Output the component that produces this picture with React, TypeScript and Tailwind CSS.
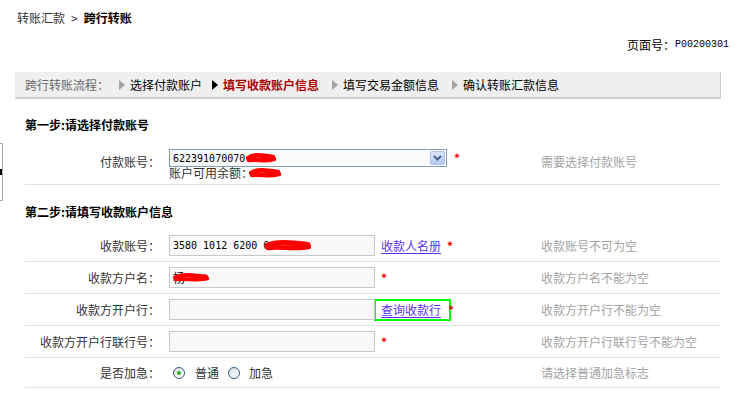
const cjk = { fontFamily: '"Noto Sans CJK SC", "Liberation Sans", sans-serif' };

const Tri = ({ dark, wide }: { dark?: boolean; wide?: boolean }) => (
  <span className={`inline-block w-0 h-0 border-y-[5px] border-y-transparent border-l-[6px] mr-[5px] ${wide ? 'ml-[13px]' : 'ml-[10px]'} ${dark ? 'border-l-black' : 'border-l-[#a3a3a3]'}`} />
);

const Scribble = ({ w, h }: { w: number; h: number }) => (
  <svg width={w} height={h} viewBox={`0 0 ${w} ${h}`} className="absolute">
    <path
      d={`M2 ${h / 2} C ${w * 0.25} ${h * 0.1}, ${w * 0.5} ${h * 0.2}, ${w - 3} ${h * 0.4} M3 ${h * 0.7} C ${w * 0.35} ${h * 0.55}, ${w * 0.7} ${h * 0.9}, ${w - 2} ${h * 0.6}`}
      stroke="#ff0000"
      strokeWidth={h * 0.45}
      strokeLinecap="round"
      fill="none"
    />
  </svg>
);

const Star = ({ className = '' }: { className?: string }) => (
  <span className={`text-[#ff0000] font-bold text-[12px] leading-none ${className}`}>*</span>
);

const Link = ({ text }: { text: string }) => (
  <span className="text-[#5a32f5] underline underline-offset-2 leading-[14px]">{text}</span>
);

const Input = ({ children }: { children?: React.ReactNode }) => (
  <div className="relative w-[206px] h-[21px] border border-[#c8c8c8] bg-[#f9f9f9] flex items-center pl-[3px]">{children}</div>
);

const Row = ({ label, hint, children, last }: { label: string; hint: string; children: React.ReactNode; last?: boolean }) => (
  <div className={`flex items-center border-b border-[#e2e2e2] ${last ? 'h-[30px]' : 'h-[32px]'}`}>
    <div className="w-[135px] text-right text-[#333]">{label}</div>
    <div className="w-[381px] pl-[9px] flex items-center">{children}</div>
    <div className="text-[#a3a3a3]">{hint}</div>
  </div>
);

const Radio = ({ checked }: { checked?: boolean }) => (
  <span className="w-[12px] h-[12px] rounded-full border border-[#2c5f8a] bg-gradient-to-br from-[#dcdcdc] to-white flex items-center justify-center">
    {checked && <span className="w-[4px] h-[4px] rounded-full bg-[#22b422]" />}
  </span>
);

export default function App() {
  return (
    <div className="relative w-[748px] h-[395px] bg-white overflow-hidden text-[12px] text-[#333]" style={cjk}>
      {/* collapsed side tab */}
      <div className="absolute left-[-2px] top-[143px] w-[5px] h-[58px] border border-[#a8a8a8] bg-white">
        <div className="absolute left-[1px] top-[25px] w-[2px] h-[6px] bg-black" />
      </div>

      <div className="pt-[11px] pl-[17px] h-[25px] leading-[14px] flex items-center gap-[6px]">
        <span>转账汇款</span>
        <span className="text-[#333]">&gt;</span>
        <span className="font-bold text-black">跨行转账</span>
      </div>

      <div className="mt-[13px] h-[14px] leading-[14px] flex justify-end pr-[19px] text-black">
        <span>页面号：</span>
        <span style={{ fontFamily: '"Liberation Mono", monospace' }} className="text-[10px]">P00200301</span>
      </div>

      <div className="ml-[15px] mt-[20px] w-[706px] h-[27px] bg-[#efefef] border-b-2 border-r border-[#cfcfcf] flex items-center pl-[10px]">
        <span className="text-[#6a6a6a]">跨行转账流程：</span>
        <Tri />
        <span className="text-black">选择付款账户</span>
        <Tri dark />
        <span className="text-[#a80000] font-bold">填写收款账户信息</span>
        <Tri wide />
        <span className="text-black">填写交易金额信息</span>
        <Tri wide />
        <span className="text-black">确认转账汇款信息</span>
      </div>

      <div className="ml-[25px] w-[696px]">
        <div className="pt-[19px] pb-[8px] leading-[14px] font-bold text-black">第一步:请选择付款账号</div>

        <div className="flex items-center h-[45px] border-b border-[#e2e2e2]">
          <div className="w-[135px] text-right">付款账号：</div>
          <div className="w-[381px] pl-[9px] h-full pt-[9px]">
            <div className="flex items-center">
              <div className="relative w-[278px] h-[18px] border border-[#7f9db9] bg-white flex items-center">
                <div className="flex-1 h-full bg-[#fafafa] flex items-center pl-[3px] text-black" style={{ fontFamily: '"DejaVu Sans Mono", monospace' }}>
                  <span className="text-[10px]">622391070070</span>
                  <span className="relative w-[30px] h-[10px] ml-[1px]"><Scribble w={30} h={10} /></span>
                </div>
                <div className="w-[15px] h-[14px] mr-[1px] rounded-[2px] border border-[#b0c4ee] bg-gradient-to-b from-[#dbe6ff] to-[#b4c8f5] flex items-center justify-center">
                  <svg width="9" height="6" viewBox="0 0 9 6"><path d="M1 1 L4.5 4.5 L8 1" stroke="#4d6185" strokeWidth="2" fill="none" /></svg>
                </div>
              </div>
              <Star className="ml-[7px]" />
            </div>
            <div className="leading-[12px] flex items-center">
              <span>账户可用余额：</span>
              <span className="relative w-[32px] h-[10px] -ml-[4px]"><Scribble w={32} h={10} /></span>
            </div>
          </div>
          <div className="text-[#a3a3a3]">需要选择付款账号</div>
        </div>

        <div className="pt-[20px] pb-[11px] leading-[14px] font-bold text-black">第二步:请填写收款账户信息</div>

        <Row label="收款账号：" hint="收款账号不可为空">
          <Input>
            <span className="text-[10px] text-black whitespace-pre" style={{ fontFamily: '"DejaVu Sans Mono", monospace' }}>3580 1012 6200 0</span>
            <span className="relative w-[46px] h-[11px] -ml-[4px]"><Scribble w={46} h={11} /></span>
          </Input>
          <span className="ml-[6px]"><Link text="收款人名册" /></span>
          <Star className="ml-[6px]" />
        </Row>

        <Row label="收款方户名：" hint="收款方户名不能为空">
          <Input>
            <span className="text-black">杨</span>
            <span className="relative w-[36px] h-[9px] -ml-[12px]"><Scribble w={36} h={9} /></span>
          </Input>
          <Star className="ml-[6px]" />
        </Row>

        <Row label="收款方开户行：" hint="收款方开户行不能为空">
          <Input />
          <div className="h-[22px] w-[77px] border-2 border-[#00ff00] flex items-center pl-[5px] -ml-[1px]">
            <Link text="查询收款行" />
          </div>
          <Star className="ml-[-3px] text-[8px]" />
        </Row>

        <Row label="收款方开户行联行号：" hint="收款方开户行联行号不能为空">
          <Input />
          <Star className="ml-[6px]" />
        </Row>

        <Row label="是否加急：" hint="请选择普通加急标志" last>
          <div className="flex items-center pl-[4px]">
            <Radio checked />
            <span className="ml-[10px]">普通</span>
            <span className="ml-[9px]"><Radio /></span>
            <span className="ml-[9px]">加急</span>
          </div>
        </Row>
      </div>
    </div>
  );
}
